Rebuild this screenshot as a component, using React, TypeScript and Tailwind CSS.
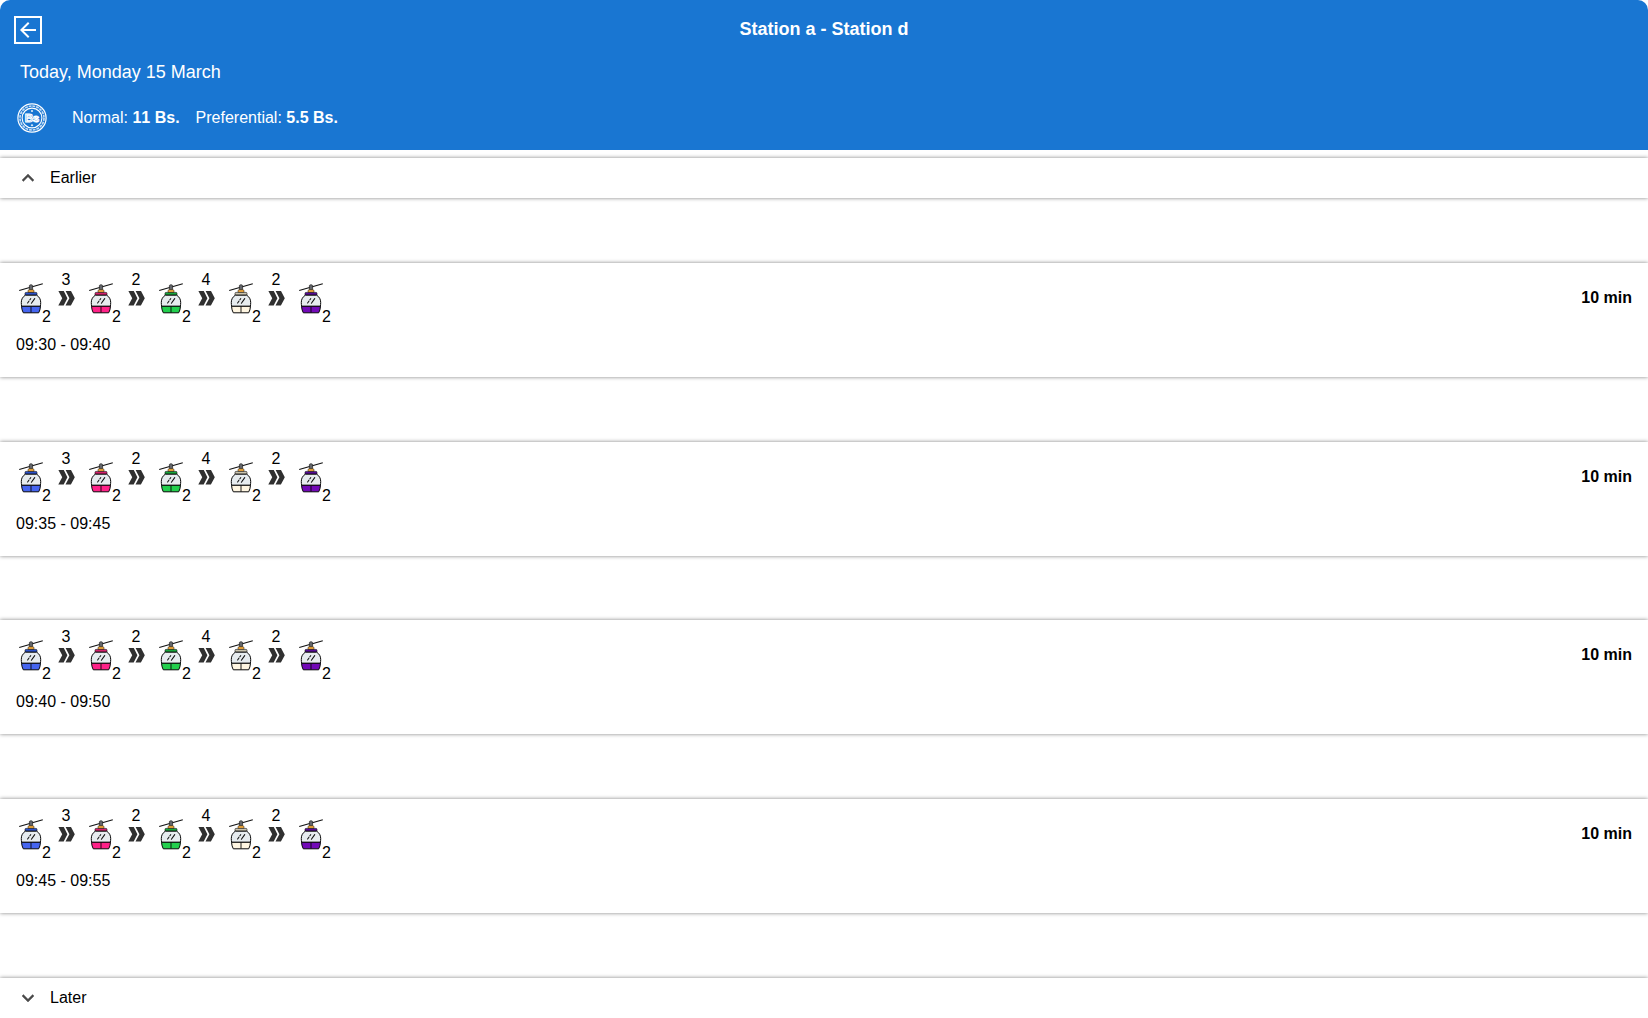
import React from "react";

type Line = { main: string; cap: string };

const LINES: Line[] = [
  { main: "#4565f0", cap: "#2b50c8" },
  { main: "#ff2188", cap: "#d3206c" },
  { main: "#22cf4d", cap: "#17a53a" },
  { main: "#fff6e2", cap: "#c9c3ae" },
  { main: "#7209b7", cap: "#560a95" },
];
const TRANSFERS = [3, 2, 4, 2];
const TIMES = ["09:30 - 09:40", "09:35 - 09:45", "09:40 - 09:50", "09:45 - 09:55"];

function Cabin({ main, cap }: Line) {
  return (
    <svg className="block h-8 w-[26px]" viewBox="0 0 26 32">
      <path d="M1.2 7.5 24.8.7" stroke="#111" strokeWidth="1.1" fill="none" />
      <path d="M11.4 2.4c.5-.9 2.7-.9 3.2 0v4.4h-3.2Z" fill="#63666b" stroke="#222" strokeWidth=".7" />
      <path d="M10 9.4V7.8c0-.6.5-1 1-1h4c.5 0 1 .4 1 1v1.6Z" fill="#ffb23e" stroke="#111" strokeWidth=".5" />
      <path d="M7 12.2v-1.8c0-.6.4-1 1-1h10c.6 0 1 .4 1 1v1.8Z" fill={cap} stroke="#111" strokeWidth=".6" />
      <path d="M7.3 12.2h11.4c2.6 1.7 4 4.1 4 7.3 0 1.4-.1 2.6-.4 3.8H3.7c-.3-1.2-.4-2.4-.4-3.8 0-3.2 1.4-5.6 4-7.3Z" fill="#e7ecef" stroke="#080808" strokeWidth="1" />
      <path d="M3.5 23.3h19c-.2 2.6-.8 4.8-1.8 6.5H5.3c-1-1.7-1.6-3.9-1.8-6.5Z" fill={main} stroke="#080808" strokeWidth="1" strokeLinejoin="round" />
      <path d="M13 23.4v6.2" stroke="#080808" strokeWidth=".9" />
      <path d="m9.6 20 1.3-1.8m1-1.4.8-1.1m.7 4.5 3.3-4.6" stroke="#111" strokeWidth="1.1" strokeLinecap="round" fill="none" />
    </svg>
  );
}

function Chevrons() {
  return (
    <svg className="block h-[15px] w-[17px]" viewBox="0 0 17 15" fill="#303030">
      <path d="M.4.1h5.4l3.6 7.2-3.7 7.3H.3L4.2 7.3Z" />
      <path d="M7.6.1H13l3.8 7.2-3.9 7.3H7.5l3.9-7.3Z" />
    </svg>
  );
}

function Coin() {
  return (
    <svg className="h-[30px] w-[30px]" viewBox="0 0 30 30" fill="none" stroke="#fff">
      <circle cx="15" cy="15" r="14.1" strokeWidth="1.2" />
      <circle cx="15" cy="15" r="12" strokeWidth="1.6" strokeDasharray="2.9 .87" opacity=".75" />
      <circle cx="15" cy="15" r="9.9" strokeWidth="1.1" />
      <circle cx="15" cy="8" r=".7" fill="#fff" strokeWidth=".6" />
      <circle cx="15" cy="22.3" r=".7" fill="#fff" strokeWidth=".6" />
      <text x="14.9" y="19.1" textAnchor="middle" fontFamily="Liberation Sans" fontSize="11.5" fontWeight="700" strokeWidth="1" fill="#6fb0f2" letterSpacing="-.2">
        Bs
      </text>
    </svg>
  );
}

function ToggleBar({ label, up }: { label: string; up?: boolean }) {
  return (
    <div className="flex h-10 items-center pl-4 shadow-[0_0_4px_gray]">
      <svg className="h-6 w-6" viewBox="0 0 24 24" fill="#4a4a4a" stroke="#4a4a4a" strokeWidth=".4">
        {up ? (
          <path d="m12 8-6 6 1.41 1.41L12 10.83l4.59 4.58L18 14z" />
        ) : (
          <path d="M16.59 8.59 12 13.17 7.41 8.59 6 10l6 6 6-6z" />
        )}
      </svg>
      <span className="ml-[10px]">{label}</span>
    </div>
  );
}

function Trip({ time }: { time: string }) {
  return (
    <div className="h-[114px] shrink-0 px-4 pt-2 shadow-[0_0_4px_gray]">
      <div className="flex h-[54px] items-start justify-between">
        <div className="flex">
          {LINES.map((line, i) => (
            <div key={line.main} className="flex w-[70px]">
              <div className="flex w-[35px] shrink-0 pl-[2px] pt-3">
                <Cabin {...line} />
                <span className="-ml-[2px] mt-[22px] leading-6">2</span>
              </div>
              {i < TRANSFERS.length && (
                <div className="ml-[6px] flex w-[18px] flex-col items-center">
                  <span className="h-5 leading-[18px]">{TRANSFERS[i]}</span>
                  <Chevrons />
                </div>
              )}
            </div>
          ))}
        </div>
        <b className="mt-[15px] leading-6">10 min</b>
      </div>
      <div className="mt-2 leading-6">{time}</div>
    </div>
  );
}

export default function App() {
  return (
    <div className="h-[1018px] overflow-hidden bg-white font-['Liberation_Sans',Arial,sans-serif] text-base text-black">
      <header className="h-[150px] rounded-t-[10px] bg-[#1976d2] pt-4 text-white">
        <div className="grid h-7 grid-cols-[1fr_auto_1fr] items-center px-[14px]">
          <button className="flex h-7 w-7 items-center justify-center border-2 border-white">
            <svg className="h-6 w-6 shrink-0" viewBox="0 0 24 24" fill="#fff">
              <path d="M20 11H7.83l5.59-5.59L12 4l-8 8 8 8 1.41-1.41L7.83 13H20z" />
            </svg>
          </button>
          <h1 className="-mt-[2px] text-lg font-bold leading-7">Station a - Station d</h1>
        </div>
        <div className="mt-[14px] pl-5 text-lg leading-7">Today, Monday 15 March</div>
        <div className="mt-4 flex h-8 items-center pl-[17px]">
          <Coin />
          <span className="ml-[25px]">
            Normal: <b className="[font-kerning:none]">11 Bs.</b>
          </span>
          <span className="ml-4">
            Preferential: <b>5.5 Bs.</b>
          </span>
        </div>
      </header>
      <div className="mt-2">
        <ToggleBar label="Earlier" up />
      </div>
      <main className="my-[64.9px] flex flex-col gap-[64.75px]">
        {TIMES.map((t) => (
          <Trip key={t} time={t} />
        ))}
      </main>
      <ToggleBar label="Later" />
    </div>
  );
}
